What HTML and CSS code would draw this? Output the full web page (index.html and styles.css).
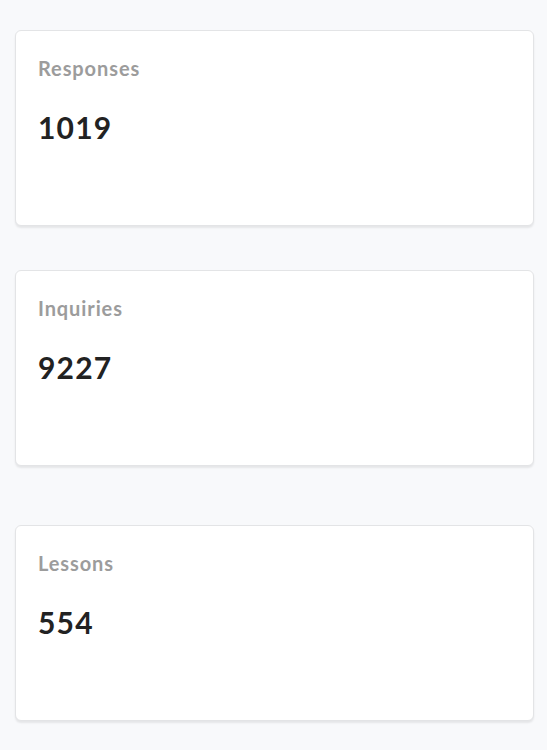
FILE: index.html
```html
<!DOCTYPE html>
<html lang="en">
<head>
<meta charset="utf-8">
<title>Stats</title>
<link rel="stylesheet" href="styles.css">
</head>
<body>
<main class="stats">
  <section class="card">
    <div class="card-label">Responses</div>
    <div class="card-value">1019</div>
  </section>
  <section class="card">
    <div class="card-label">Inquiries</div>
    <div class="card-value">9227</div>
  </section>
  <section class="card card-spaced">
    <div class="card-label">Lessons</div>
    <div class="card-value">554</div>
  </section>
</main>
</body>
</html>
```
FILE: styles.css
```css
html, body {
  margin: 0;
  padding: 0;
  background: #f8f9fb;
}
body {
  font-family: "Lato", "Open Sans", sans-serif;
}
.stats {
  display: flex;
  flex-direction: column;
  padding: 30px 13px 0 15px;
}
.card {
  box-sizing: border-box;
  height: 196px;
  background: #ffffff;
  border: 1px solid #e3e4e6;
  border-radius: 6px;
  box-shadow: 0 2px 2px rgba(0, 0, 0, 0.08);
  padding: 25px 22px 0 22px;
  margin-bottom: 44px;
}
.card-spaced {
  margin-top: 15px;
}
.card-label {
  font-size: 20px;
  font-weight: 700;
  color: #9c9c9c;
  line-height: 24px;
  letter-spacing: 0.9px;
}
.card-value {
  margin-top: 29px;
  font-size: 30px;
  font-weight: 700;
  color: #222222;
  line-height: 36px;
  letter-spacing: 1.2px;
}
```
